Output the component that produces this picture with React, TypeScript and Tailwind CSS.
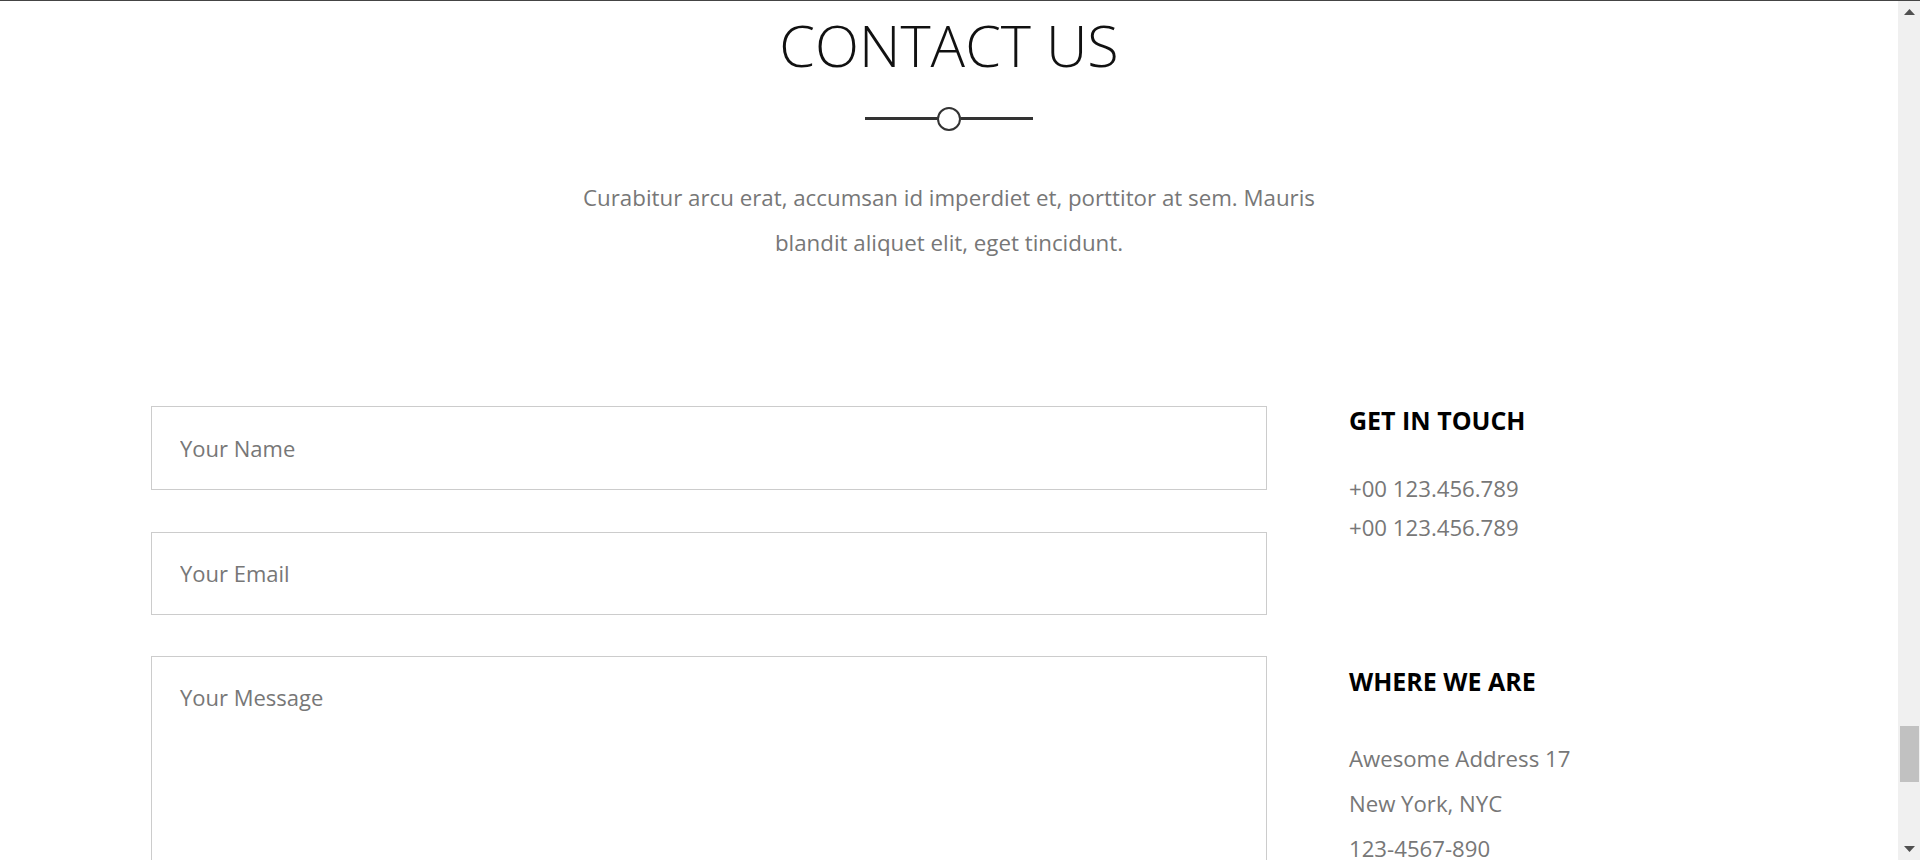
const phones = ["+00 123.456.789", "+00 123.456.789"];
const address = ["Awesome Address 17", "New York, NYC", "123-4567-890"];

export default function App() {
  return (
    <div className="flex h-[860px] w-[1920px] overflow-hidden border-t border-[#444444] bg-white font-['Open_Sans',sans-serif] text-[#777777]">
      <main className="flex min-w-0 flex-1 flex-col items-center">
        <h1 className="pt-[16px] text-[57.5px] font-light leading-none text-[#111111]">CONTACT US</h1>

        <div className="mt-[32px] flex items-center">
          <span className="h-[2.5px] w-[72px] bg-[#333333]" />
          <span className="h-6 w-6 rounded-full border-2 border-[#333333]" />
          <span className="h-[2.5px] w-[72px] bg-[#333333]" />
        </div>

        <p className="mt-[44px] w-[790px] text-center text-[22.3px] leading-[45px]">
          Curabitur arcu erat, accumsan id imperdiet et, porttitor at sem. Mauris blandit aliquet elit, eget tincidunt.
        </p>

        <section className="mt-[141px] flex w-full pl-[151px]">
          <form className="flex w-[1116px] flex-col" onSubmit={(event) => event.preventDefault()}>
            <input
              type="text"
              placeholder="Your Name"
              className="h-[84px] w-full border border-[#cccccc] px-[28px] text-[22px] text-[#333333] outline-none placeholder:text-[#777777]"
            />
            <input
              type="email"
              placeholder="Your Email"
              className="mt-[42px] h-[83px] w-full border border-[#cccccc] px-[28px] text-[22px] text-[#333333] outline-none placeholder:text-[#777777]"
            />
            <textarea
              placeholder="Your Message"
              className="mt-[41px] h-[260px] w-full resize-none border border-[#cccccc] px-[28px] pt-[24px] text-[22px] leading-[33px] text-[#333333] outline-none placeholder:text-[#777777]"
            />
          </form>

          <aside className="-mt-px ml-[82px] flex flex-col text-[22.2px]">
            <h3 className="text-[25px] font-bold leading-[30px] text-black">GET IN TOUCH</h3>
            <div className="mt-[34px] flex flex-col leading-[39px]">
              {phones.map((phone, i) => (
                <span key={i}>{phone}</span>
              ))}
            </div>

            <h3 className="mt-[119px] text-[25px] font-bold leading-[30px] text-black">WHERE WE ARE</h3>
            <div className="mt-[40px] flex flex-col leading-[45px]">
              {address.map((line) => (
                <span key={line}>{line}</span>
              ))}
            </div>
          </aside>
        </section>
      </main>

      {/* page scrollbar as seen in the capture */}
      <div className="flex w-[22px] shrink-0 flex-col bg-[#f0f0f0]">
        <div className="flex h-[22px] items-center justify-center">
          <svg width="11" height="6" viewBox="0 0 11 6" aria-hidden="true">
            <polygon points="5.5,0 11,6 0,6" fill="#505050" />
          </svg>
        </div>
        <div className="ml-[2px] mt-[703px] h-[56px] w-[19px] bg-[#c1c1c1]" />
        <div className="mt-auto flex h-[22px] items-center justify-center">
          <svg width="11" height="6" viewBox="0 0 11 6" aria-hidden="true">
            <polygon points="0,0 11,0 5.5,6" fill="#505050" />
          </svg>
        </div>
      </div>
    </div>
  );
}
